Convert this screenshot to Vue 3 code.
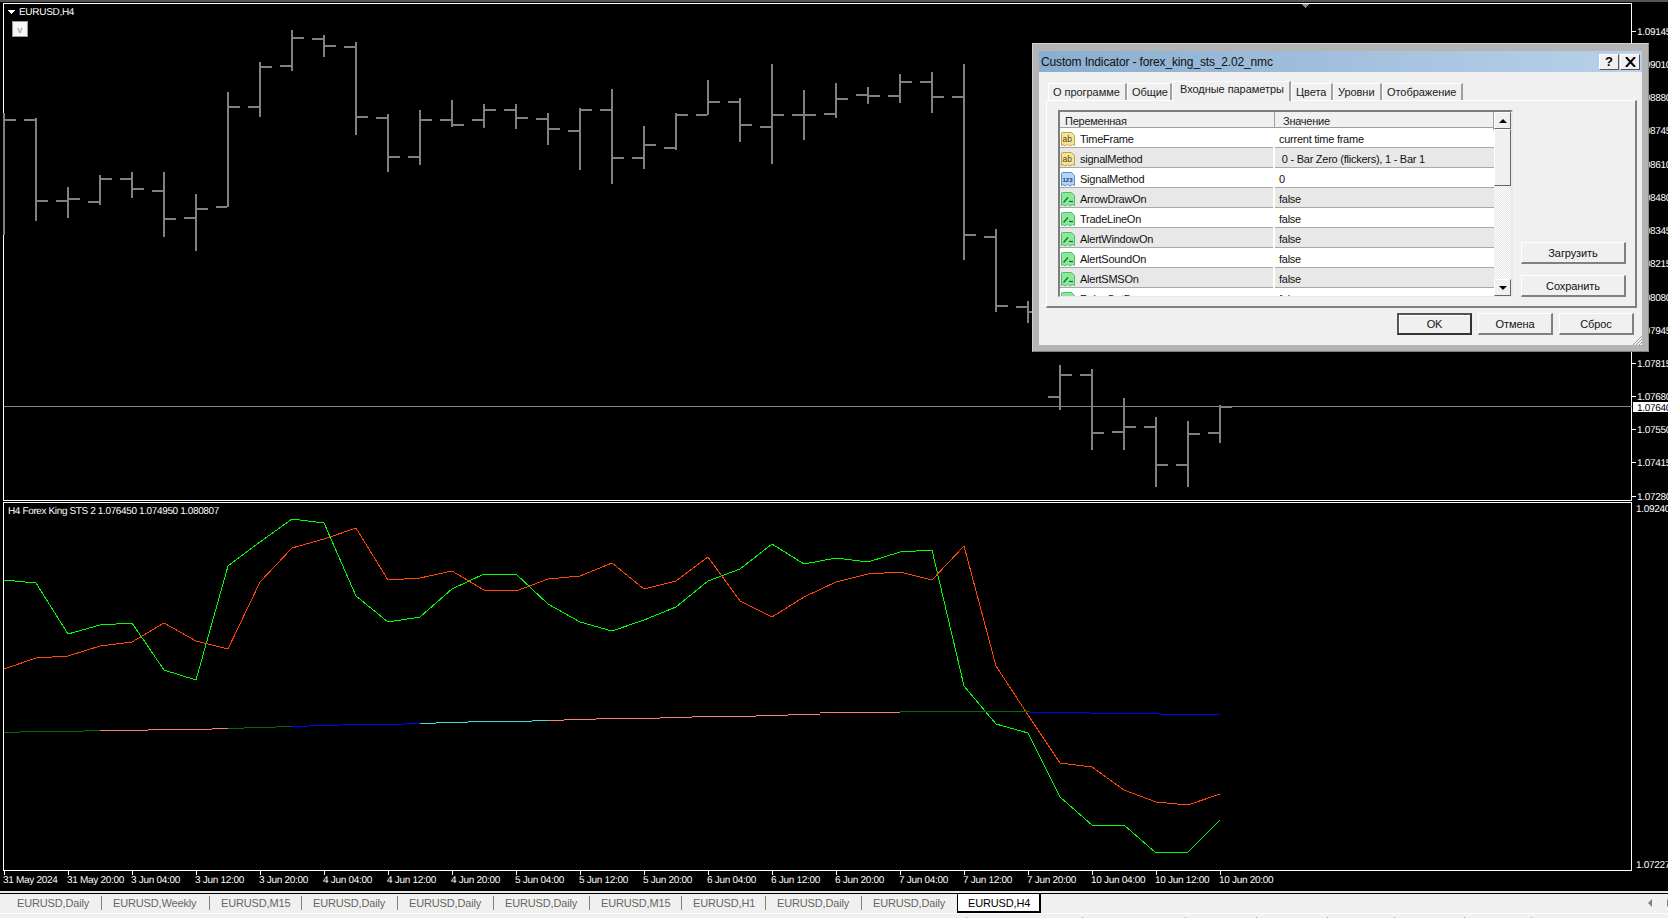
<template>
  <div class="terminal">
    <div class="chart-area">
      <svg class="chart" width="1668" height="892" shape-rendering="crispEdges">
        <rect x="0" y="0" width="1668" height="2" fill="#555" />
        <path d="M1300 3h10l-5 5z" fill="#8a8a8a" />

        <!-- window frames -->
        <rect x="3.5" y="3.5" width="1628" height="497" fill="none" stroke="#fff" />
        <rect x="3.5" y="502.5" width="1628" height="368" fill="none" stroke="#fff" />

        <!-- last price line -->
        <rect x="4" y="406" width="1628" height="1" fill="#778899" />

        <!-- price bars -->
        <g fill="#808080">
          <g v-for="b in bars" :key="b.x">
            <rect :x="b.x - 1" :y="b.h" width="2" :height="b.l - b.h" />
            <rect v-if="b.o" :x="b.x - 12" :y="b.o - 1" width="11" height="2" />
            <rect :x="b.x + 1" :y="b.c - 1" width="11" height="2" />
          </g>
        </g>

        <!-- indicator -->
        <polyline :points="greenLine" fill="none" stroke="#00ff00" />
        <polyline :points="redLine" fill="none" stroke="#ff4500" />
        <rect
          v-for="s in steps"
          :key="s[0]"
          :x="s[0]"
          :y="s[2]"
          :width="s[1] - s[0]"
          height="1"
          :fill="s[3]"
        />

        <!-- price axis -->
        <g v-for="p in prices" :key="p[0]">
          <rect x="1632" :y="p[1]" width="4" height="1" fill="#fff" />
          <text class="axis" x="1637" :y="p[1] + 4">{{ p[0] }}</text>
        </g>
        <rect x="1633" y="402" width="35" height="10" fill="#fff" />
        <text class="axis dark" x="1637" y="411">1.07640</text>
        <text class="axis" x="1636" y="512">1.09240</text>
        <text class="axis" x="1636" y="868">1.07227</text>

        <!-- time axis -->
        <g v-for="t in times" :key="t[1]">
          <rect :x="t[0]" y="871" width="1" height="4" fill="#fff" />
          <text class="axis" :x="t[0] - 1" y="883">{{ t[1] }}</text>
        </g>

        <!-- labels -->
        <path d="M7 10h8l-4 4z" fill="#fff" />
        <text class="axis" x="19" y="15">EURUSD,H4</text>
        <rect x="12.5" y="21.5" width="15" height="15" fill="#f6f6f6" stroke="#999" />
        <text class="axis vee" x="17" y="33">v</text>
        <text class="axis tight" x="8" y="514">H4 Forex King STS 2 1.076450 1.074950 1.080807</text>
      </svg>

      <div class="dialog">
        <div class="titlebar">
          <span class="title">Custom Indicator - forex_king_sts_2.02_nmc</span>
          <button class="cap-btn">?</button>
          <button class="cap-btn close">
            <svg width="11" height="10" viewBox="0 0 11 10"><path d="M1 0l9 10M10 0L1 10" stroke="#000" stroke-width="2" /></svg>
          </button>
        </div>
        <div class="client">
          <div class="tabs">
            <div v-for="t in dialogTabs" :key="t" class="tab" :class="{ active: t === 'Входные параметры' }">{{ t }}</div>
          </div>
          <div class="panel">
            <div class="list">
              <div class="list-body">
                <div class="list-head">
                  <div class="head-cell first">Переменная</div>
                  <div class="head-cell">Значение</div>
                </div>
                <div v-for="r in rows" :key="r.name" class="row">
                  <div class="cell name">
                    <svg class="ico" width="16" height="15" viewBox="0 0 16 15" shape-rendering="auto">
                      <path
                        d="M1.5 1.5Q1.5.5 2.5.5H11.5L14.5 3.5V13.5L12.5 12.5 10 14 7.5 12.5 5 14 3 12.5 1.5 13.5Z"
                        :fill="kinds[r.kind].fill"
                        :stroke="kinds[r.kind].line"
                      />
                      <template v-if="r.kind === 'bool'">
                        <path d="M3.5 10.5L8 5.5" fill="none" stroke="#0c6a2c" stroke-width="1.2" />
                        <path d="M9 9.5H13" fill="none" stroke="#0c6a2c" stroke-width="1.2" />
                      </template>
                      <text v-else class="ico-text" :class="r.kind" x="2.5" y="10">{{ r.kind === 'num' ? '123' : 'ab' }}</text>
                    </svg>
                    <span>{{ r.name }}</span>
                  </div>
                  <div class="cell value">{{ r.value }}</div>
                </div>
              </div>
              <div class="scrollbar">
                <button class="sb-btn"><i class="arrow up"></i></button>
                <div class="sb-track"><div class="sb-thumb"></div></div>
                <button class="sb-btn"><i class="arrow down"></i></button>
              </div>
            </div>
            <div class="side">
              <button class="btn wide">Загрузить</button>
              <button class="btn wide">Сохранить</button>
            </div>
          </div>
          <div class="footer">
            <button class="btn default">OK</button>
            <button class="btn">Отмена</button>
            <button class="btn">Сброс</button>
            <svg class="grip" width="10" height="10" viewBox="0 0 10 10"><path d="M10 1L1 10M10 4L4 10M10 7L7 10" stroke="#999" /></svg>
          </div>
        </div>
      </div>
    </div>

    <div class="tabbar">
      <div v-for="(t, i) in chartTabs" :key="i" class="chart-tab" :class="{ active: i === chartTabs.length - 1 }">{{ t }}</div>
      <div class="tab-arrows">
        <i class="tri left"></i>
        <i class="tri right"></i>
      </div>
    </div>
    <div class="statusbar"><span v-for="n in 8" :key="n"></span></div>
  </div>
</template>

<script setup>
// x of bar i is 4 + 32 * i, values are pixel rows read off the chart: [high, low, open, close]
const ohlc = [
  [113, 235, 0, 120], [118, 221, 120, 201], [187, 218, 201, 199], [175, 205, 202, 179],
  [172, 198, 179, 189], [172, 237, 191, 219], [194, 251, 218, 209], [92, 207, 207, 107],
  [62, 117, 107, 67], [30, 71, 66, 38], [35, 57, 39, 46], [42, 135, 47, 117],
  [114, 172, 118, 157], [110, 165, 157, 120], [100, 127, 120, 125], [104, 128, 120, 110],
  [104, 129, 110, 118], [113, 145, 119, 129], [108, 170, 131, 110], [89, 184, 110, 158],
  [126, 169, 158, 145], [113, 150, 148, 115], [80, 115, 115, 102], [98, 142, 102, 125],
  [64, 164, 127, 115], [90, 140, 115, 115], [83, 118, 114, 99], [87, 104, 95, 96],
  [74, 103, 96, 82], [72, 113, 82, 97], [64, 260, 97, 235], [229, 312, 237, 306],
  [301, 323, 307, 312], [365, 410, 397, 375], [369, 450, 375, 433], [398, 450, 432, 427],
  [417, 487, 427, 465], [421, 487, 465, 434], [405, 443, 433, 407]
]
const bars = ohlc.map(([h, l, o, c], i) => ({ x: 4 + 32 * i, h, l, o, c }))

const green = [580, 583, 634, 625, 623, 670, 680, 566, 542, 519, 523, 596, 622, 617, 589, 574, 574, 604, 622, 631, 620, 607, 581, 569, 544, 564, 558, 562, 552, 550, 686, 724, 733, 797, 825, 825, 853, 852, 820]
const red = [669, 658, 656, 646, 642, 623, 641, 649, 582, 548, 539, 528, 580, 578, 571, 590, 591, 579, 576, 563, 589, 581, 557, 601, 617, 597, 582, 574, 572, 580, 546, 666, 715, 763, 767, 790, 802, 805, 794]
const toPoints = (arr) => arr.map((y, i) => `${4 + 32 * i},${y}`).join(' ')
const greenLine = toPoints(green)
const redLine = toPoints(red)

const dk = '#007000'
const sal = '#fa8072'
const blu = '#0000ff'
const tq = '#40e0d0'
const steps = [
  [4, 20, 732, dk], [20, 84, 731, dk], [84, 100, 730, dk],
  [100, 148, 730, sal], [148, 212, 729, sal], [212, 228, 728, sal],
  [228, 244, 728, dk], [244, 276, 727, dk], [276, 292, 726, dk],
  [292, 308, 726, blu], [308, 340, 725, blu], [340, 404, 724, blu], [404, 420, 723, blu],
  [420, 436, 723, tq], [436, 468, 722, tq], [468, 532, 721, tq], [532, 548, 720, tq],
  [548, 564, 720, sal], [564, 596, 719, sal], [596, 660, 718, sal], [660, 692, 717, sal],
  [692, 756, 716, sal], [756, 788, 715, sal], [788, 820, 714, sal], [820, 900, 712, sal],
  [900, 1030, 711, dk], [1030, 1090, 712, blu], [1090, 1160, 713, blu], [1160, 1220, 714, blu]
]

const prices = [
  ['1.09145', 31], ['1.09010', 64], ['1.08880', 97], ['1.08745', 130], ['1.08610', 164],
  ['1.08480', 197], ['1.08345', 230], ['1.08215', 263], ['1.08080', 297], ['1.07945', 330],
  ['1.07815', 363], ['1.07680', 396], ['1.07550', 429], ['1.07415', 462], ['1.07280', 496]
]

const timeLabels = [
  '31 May 2024', '31 May 20:00', '3 Jun 04:00', '3 Jun 12:00', '3 Jun 20:00', '4 Jun 04:00', '4 Jun 12:00',
  '4 Jun 20:00', '5 Jun 04:00', '5 Jun 12:00', '5 Jun 20:00', '6 Jun 04:00', '6 Jun 12:00', '6 Jun 20:00',
  '7 Jun 04:00', '7 Jun 12:00', '7 Jun 20:00', '10 Jun 04:00', '10 Jun 12:00', '10 Jun 20:00'
]
const times = timeLabels.map((t, i) => [4 + 64 * i, t])

const dialogTabs = ['О программе', 'Общие', 'Входные параметры', 'Цвета', 'Уровни', 'Отображение']

const kinds = {
  str: { fill: '#f5e59a', line: '#bfa24a' },
  num: { fill: '#b5d3f3', line: '#5a8fc8' },
  bool: { fill: '#8fe89a', line: '#4dbb6e' }
}

const rows = [
  { name: 'TimeFrame', value: 'current time frame', kind: 'str' },
  { name: 'signalMethod', value: ' 0 - Bar Zero (flickers), 1 - Bar 1', kind: 'str' },
  { name: 'SignalMethod', value: '0', kind: 'num' },
  { name: 'ArrowDrawOn', value: 'false', kind: 'bool' },
  { name: 'TradeLineOn', value: 'false', kind: 'bool' },
  { name: 'AlertWindowOn', value: 'false', kind: 'bool' },
  { name: 'AlertSoundOn', value: 'false', kind: 'bool' },
  { name: 'AlertSMSOn', value: 'false', kind: 'bool' },
  { name: 'RulesOutBar', value: 'false', kind: 'bool' }
]

const chartTabs = [
  'EURUSD,Daily', 'EURUSD,Weekly', 'EURUSD,M15', 'EURUSD,Daily', 'EURUSD,Daily', 'EURUSD,Daily',
  'EURUSD,M15', 'EURUSD,H1', 'EURUSD,Daily', 'EURUSD,Daily', 'EURUSD,H4'
]
</script>

<style>
html,
body {
  margin: 0;
  background: #000;
  overflow: hidden;
}
</style>

<style scoped>
.terminal {
  width: 1668px;
  height: 918px;
  display: flex;
  flex-direction: column;
  font-family: "Liberation Sans", Arial, sans-serif;
  overflow: hidden;
}

.chart-area {
  position: relative;
  height: 891px;
  flex: none;
  background: #000;
  border-bottom: 2px solid #e8e8e8;
  box-sizing: content-box;
  overflow: hidden;
}

.chart {
  display: block;
}

.axis {
  font-family: "Liberation Sans", Arial, sans-serif;
  font-size: 10px;
  letter-spacing: -0.3px;
  fill: #fff;
  text-rendering: geometricPrecision;
}

.axis.tight {
  letter-spacing: -0.37px;
}

.axis.dark {
  fill: #000;
}

.axis.vee {
  fill: #b0b0b0;
  font-weight: bold;
}

/* dialog window */
.dialog {
  position: absolute;
  left: 1032px;
  top: 43px;
  width: 617px;
  height: 309px;
  box-sizing: border-box;
  background: #b4b4b4;
  border: 1px solid #d0d0d0;
  border-right-color: #8a8a8a;
  border-bottom-color: #808080;
  padding: 7px 6px 6px 6px;
  display: flex;
  flex-direction: column;
  font-size: 11px;
  letter-spacing: -0.25px;
  color: #000;
}

.titlebar {
  height: 21px;
  flex: none;
  display: flex;
  align-items: center;
  gap: 1px;
  padding: 0 2px 0 2px;
  background: linear-gradient(90deg, #8aaed0, #b9d1ea);
}

.title {
  flex: 1;
  font-size: 12px;
  letter-spacing: -0.15px;
  color: #111;
}

.cap-btn {
  width: 20px;
  height: 16px;
  padding: 0;
  font: bold 13px "Liberation Sans", Arial, sans-serif;
  color: #000;
  background: #f0f0f0;
  border: 1px solid;
  border-color: #fff #555 #555 #fff;
  display: flex;
  align-items: center;
  justify-content: center;
}

.client {
  flex: 1;
  background: #f0f0f0;
  display: flex;
  flex-direction: column;
  padding: 9px 5px 0 7px;
  min-height: 0;
}

.tabs {
  display: grid;
  grid-template-columns: 79px 45px 119px 42px 49px 81px;
  height: 19px;
  flex: none;
  padding-left: 2px;
  align-items: end;
}

.tab {
  height: 17px;
  box-sizing: border-box;
  border-right: 2px solid #a0a0a0;
  border-top: 1px solid #fff;
  border-left: 1px solid #fff;
  padding-left: 4px;
  line-height: 17px;
  letter-spacing: -0.05px;
  white-space: nowrap;
  color: #222;
}

.tab.active {
  height: 20px;
  margin-bottom: -1px;
  background: #f0f0f0;
  position: relative;
  z-index: 1;
  line-height: 15px;
  padding-left: 7px;
}

.panel {
  flex: none;
  height: 208px;
  box-sizing: border-box;
  border: 1px solid;
  border-color: #fff #808080 #808080 #fff;
  border-width: 1px 2px 2px 1px;
  padding: 9px 9px 9px 11px;
  display: flex;
  justify-content: space-between;
}

.list {
  width: 455px;
  height: 187px;
  box-sizing: border-box;
  border: 2px solid;
  border-bottom-width: 1px;
  border-color: #7d7d7d #e8e8e8 #e8e8e8 #7d7d7d;
  display: flex;
  overflow: hidden;
}

.list-body {
  flex: 1;
  min-width: 0;
  overflow: hidden;
}

.list-head {
  display: grid;
  grid-template-columns: 215px 1fr;
  height: 16px;
  background: #f0f0f0;
  border-bottom: 1px solid #a0a0a0;
  box-sizing: border-box;
}

.head-cell {
  line-height: 18px;
  padding-left: 8px;
  border-right: 1px solid #a0a0a0;
  color: #222;
}

.head-cell.first {
  padding-left: 5px;
}

.row {
  display: grid;
  grid-template-columns: 215px 1fr;
  height: 20px;
  box-sizing: border-box;
  background: #fff;
  border-bottom: 1px solid #a8a8a8;
}

.row:nth-child(odd) {
  background: #e8e8e8;
}

.cell {
  line-height: 21px;
  white-space: pre;
  color: #111;
}

.cell.value {
  padding: 1px 0 0 4px;
  box-sizing: border-box;
}

.cell.name {
  display: flex;
  align-items: center;
  gap: 4px;
  padding-top: 1px;
  box-sizing: border-box;
  border-right: 2px solid #fff;
}

.ico {
  flex: none;
}

.ico-text {
  font-family: "Liberation Sans", Arial, sans-serif;
  font-size: 8.5px;
  letter-spacing: 0;
  fill: #5a450c;
}

.ico-text.num {
  font-size: 6px;
  font-weight: bold;
  fill: #123c7a;
}

.scrollbar {
  width: 17px;
  flex: none;
  display: flex;
  flex-direction: column;
}

.sb-btn {
  height: 17px;
  flex: none;
  padding: 0;
  background: #f0f0f0;
  border: 1px solid;
  border-color: #fff #666 #666 #fff;
  display: flex;
  align-items: center;
  justify-content: center;
}

.arrow {
  width: 0;
  height: 0;
  border-left: 4px solid transparent;
  border-right: 4px solid transparent;
}

.arrow.up {
  border-bottom: 4px solid #000;
}

.arrow.down {
  border-top: 4px solid #000;
}

.sb-track {
  flex: 1;
  background: repeating-conic-gradient(#fff 0 25%, #e4e4e4 0 50%) 0 0 / 2px 2px;
}

.sb-thumb {
  height: 57px;
  box-sizing: border-box;
  background: #f0f0f0;
  border: 1px solid;
  border-color: #fff #666 #666 #fff;
}

.side {
  align-self: flex-end;
  display: flex;
  flex-direction: column;
  gap: 11px;
}

.btn {
  width: 75px;
  height: 22px;
  padding: 0;
  font: 11px "Liberation Sans", Arial, sans-serif;
  letter-spacing: -0.1px;
  color: #111;
  background: #f0f0f0;
  border: 1px solid;
  border-width: 1px 2px 2px 1px;
  border-color: #fff #808080 #808080 #fff;
}

.btn.wide {
  width: 105px;
}

.btn.default {
  border: 2px solid #333;
  border-top-color: #555;
  border-left-color: #555;
  box-shadow: inset 1px 1px #fff;
}

.footer {
  position: relative;
  flex: 1;
  display: flex;
  justify-content: flex-end;
  gap: 6px;
  padding: 5px 3px 0 0;
}

.grip {
  position: absolute;
  right: -5px;
  bottom: 0;
}

/* chart tabs at the bottom */
.tabbar {
  height: 19px;
  flex: none;
  display: grid;
  grid-template-columns: 102px 108px 92px 96px 96px 96px 92px 84px 96px 95px 84px 1fr;
  background: #f0f0f0;
  border-top: 1px solid #000;
  font-size: 11px;
  letter-spacing: -0.15px;
  color: #666;
}

.chart-tab {
  position: relative;
  padding-left: 11px;
  line-height: 19px;
  white-space: nowrap;
}

.chart-tab:first-child {
  padding-left: 17px;
}

.chart-tab::after {
  content: "";
  position: absolute;
  right: 0;
  top: 2px;
  height: 14px;
  border-right: 1px solid #808080;
}

.chart-tab:nth-child(10)::after {
  display: none;
}

.chart-tab.active {
  background: #fff;
  color: #000;
  height: 19px;
  box-sizing: border-box;
  border-left: 1px solid #000;
  border-right: 2px solid #000;
  border-bottom: 2px solid #000;
  padding-left: 10px;
}

.chart-tab.active::after {
  display: none;
}

.tab-arrows {
  display: flex;
  justify-content: flex-end;
  align-items: center;
  gap: 15px;
  height: 17px;
  margin-right: -3px;
}

.tri {
  width: 0;
  height: 0;
  border-top: 4px solid transparent;
  border-bottom: 4px solid transparent;
}

.tri.left {
  border-right: 4px solid #808080;
}

.tri.right {
  border-left: 4px solid #808080;
}

.statusbar {
  height: 5px;
  flex: none;
  box-sizing: border-box;
  background: #f0f0f0;
  border-top: 1px solid #fff;
  display: grid;
  grid-template-columns: 967px 116px 103px 71px 71px 67px 70px 67px;
}

.statusbar span {
  margin-top: 3px;
  border-right: 1px solid #a0a0a0;
}
</style>
